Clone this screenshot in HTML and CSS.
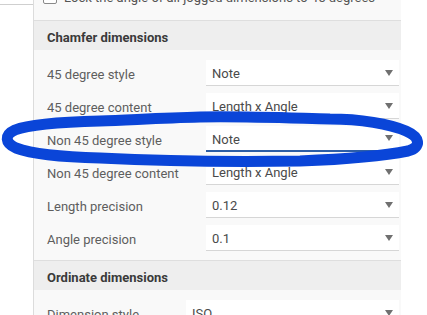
FILE: index.html
```html
<!DOCTYPE html>
<html>

<head>
    <meta name="viewport" content="width=device-width, initial-scale=1.0" />
    <title>Dimension settings</title>
    <link rel="stylesheet" href="styles.css">
</head>

<body>
    <div class="page">
        <!-- LEFT STUB -->
        <div class="gutter">
            <div class="stub"></div>
        </div>

        <!-- SETTINGS PANEL -->
        <div class="panel">
            <div class="check-row">
                <span class="checkbox"></span>
                <span>Lock the angle of all jogged dimensions to 45 degrees</span>
            </div>

            <div class="section-head">Chamfer dimensions</div>
            <div class="section">
                <div class="row">
                    <div class="label">45 degree style</div>
                    <div class="select">Note<span class="caret"></span></div>
                </div>
                <div class="row">
                    <div class="label">45 degree content</div>
                    <div class="select">Length x Angle<span class="caret"></span></div>
                </div>
                <div class="row">
                    <div class="label">Non 45 degree style</div>
                    <div class="select focused">Note<span class="caret"></span></div>
                </div>
                <div class="row">
                    <div class="label">Non 45 degree content</div>
                    <div class="select">Length x Angle<span class="caret"></span></div>
                </div>
                <div class="row">
                    <div class="label">Length precision</div>
                    <div class="select">0.12<span class="caret"></span></div>
                </div>
                <div class="row">
                    <div class="label">Angle precision</div>
                    <div class="select">0.1<span class="caret"></span></div>
                </div>
            </div>

            <div class="section-head">Ordinate dimensions</div>
            <div class="section section-wide">
                <div class="row">
                    <div class="label">Dimension style</div>
                    <div class="select">ISO<span class="caret"></span></div>
                </div>
            </div>
        </div>

        <!-- hand drawn highlight -->
        <svg class="scribble" width="427" height="315" viewBox="0 0 427 315">
            <path d="M100,121 C60,122 30,124 15,130 C4,135 5,143 16,148 C32,154 60,157 100,158 C160,161 230,162 300,161 C350,159 388,155 408,151 C422,147 420,137 406,131 C390,124 360,119 330,119 C290,118 240,116 200,117 C160,118 130,120 100,121 Z"
                fill="none" stroke="#0a45d8" stroke-width="11" stroke-linecap="round" stroke-linejoin="round" />
        </svg>
    </div>
</body>

</html>
```

FILE: styles.css
```css
body {
    margin: 0;
    background-color: #fff;
    font-family: Roboto, "Liberation Sans", Arial, sans-serif;
    font-size: 13px;
    overflow: hidden;
}

.page {
    display: flex;
    align-items: flex-start;
    width: 427px;
    height: 315px;
    overflow: hidden;
}

.gutter {
    width: 33px;
    flex-shrink: 0;
}

.stub {
    height: 4px;
    border-bottom: 1px solid #cfcfcf;
}

.panel {
    width: 367px;
    margin-top: -14px;
    background-color: #f9f9f9;
    border-left: 1px solid #dcdcdc;
}

.check-row {
    display: flex;
    align-items: flex-start;
    gap: 7px;
    height: 34px;
    box-sizing: border-box;
    padding: 4px 0 0 9px;
    line-height: 15px;
    color: #555;
}

.checkbox {
    width: 12px;
    height: 12px;
    border: 1px solid #8a8a8a;
    border-radius: 2px;
    background: #fff;
    flex-shrink: 0;
}

.section-head {
    height: 29px;
    box-sizing: border-box;
    display: flex;
    align-items: center;
    padding: 3px 0 0 13px;
    background-color: #eeeeee;
    border-top: 1px solid #dedede;
    font-weight: 700;
    color: #3a3a3a;
}

.section-head {
    height: 30px;
}

.section {
    display: flex;
    flex-direction: column;
    gap: 7px;
    padding: 10px 2px 9px 13px;
}

.row {
    display: flex;
    align-items: center;
    height: 26px;
}

.label {
    width: 159px;
    flex-shrink: 0;
    padding-top: 3px;
    color: #5e5e5e;
}

.section-wide .label {
    width: 139px;
}

.select {
    flex: 1;
    height: 26px;
    box-sizing: border-box;
    display: flex;
    align-items: center;
    padding: 2px 6px 0;
    background-color: #fff;
    border-bottom: 1px solid #d6d6d6;
    color: #4a4a4a;
}

.select.focused {
    border-bottom: 2px solid #2d5ea6;
}

.caret {
    margin-left: auto;
    margin-top: -2px;
    width: 0;
    height: 0;
    border-left: 4px solid transparent;
    border-right: 4px solid transparent;
    border-top: 6px solid #707070;
}

.scribble {
    position: absolute;
    left: 0;
    top: 0;
    pointer-events: none;
}
```
